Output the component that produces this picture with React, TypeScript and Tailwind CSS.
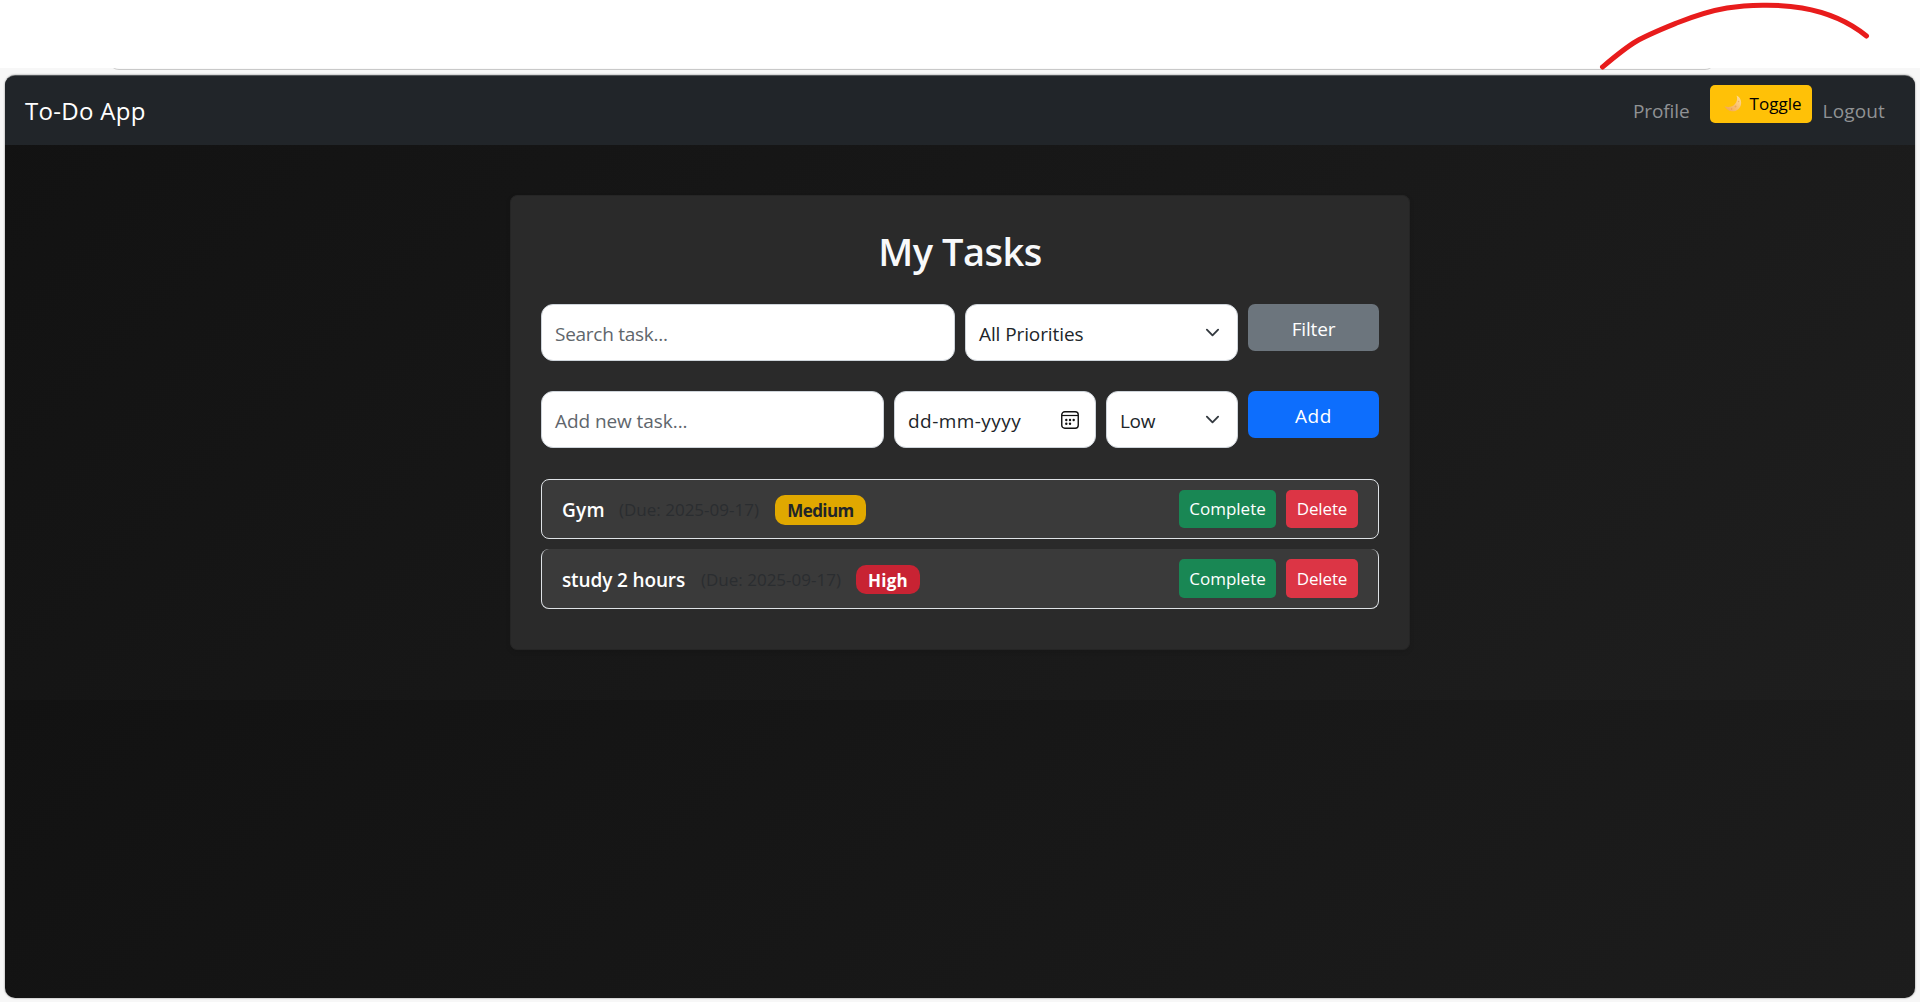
import type { ReactNode } from "react";

const tasks = [
  {
    title: "Gym",
    titleClass: "w-[41px] tracking-[0.3px]",
    due: "2025-09-17",
    priority: "Medium",
    badge: "ml-[15px] h-[30px] w-[91px] bg-[#e0a800] text-[#212529] tracking-[-0.6px]",
    row: "border h-[60px] pb-px",
    button: "h-[38px]",
  },
  {
    title: "study 2 hours",
    titleClass: "w-[123px] tracking-[-0.13px]",
    due: "2025-09-17",
    priority: "High",
    badge: "ml-[14px] h-[29px] w-[64px] bg-[#c82333] text-white tracking-[0.2px]",
    row: "border border-t-0 h-[60px]",
    button: "h-[39px]",
  },
];

function Chevron() {
  return (
    <svg viewBox="0 0 16 16" className="h-[15px] w-[15px] shrink-0" fill="none" stroke="#343a40" strokeWidth="2" strokeLinecap="round" strokeLinejoin="round">
      <path d="m2 5 6 6 6-6" />
    </svg>
  );
}

function CalendarIcon() {
  return (
    <svg viewBox="0 0 18 18" className="h-[18px] w-[18px] shrink-0">
      <rect x="0.75" y="0.75" width="16.5" height="16.5" rx="3" fill="none" stroke="#111" strokeWidth="1.4" />
      <path d="M1 4.5h16" stroke="#111" strokeWidth="1.2" />
      <g fill="#111">
        <circle cx="5.300" cy="9" r="1.2" />
        <circle cx="9" cy="9" r="1.2" />
        <circle cx="12.700" cy="9" r="1.2" />
        <circle cx="5.300" cy="12.700" r="1.2" />
        <circle cx="9" cy="12.700" r="1.2" />
      </g>
    </svg>
  );
}

function Moon() {
  return (
    <svg viewBox="0 0 18 17" className="h-[17px] w-[18px] shrink-0">
      <defs>
        <linearGradient id="moon" x1="0" y1="1" x2="1" y2="0">
          <stop offset="0" stopColor="#f0a04b" />
          <stop offset="0.5" stopColor="#f9c070" />
          <stop offset="1" stopColor="#ffe09a" />
        </linearGradient>
      </defs>
      <path d="M12.6 0.4C16 2 17.8 5.6 17 9.4 16 14 12 16.7 7.8 16.2 4.6 15.8 1.8 13.8 0.5 11.2 4.4 12.6 8.3 12 10.8 9.2 13.2 6.5 13.6 3.3 12.6 0.4Z" fill="url(#moon)" />
      <circle cx="11.5" cy="11.6" r="1" fill="#eda55a" />
      <circle cx="14.6" cy="6.5" r="0.7" fill="#f0ad60" />
      <circle cx="7.6" cy="14" r="0.7" fill="#e59a50" />
    </svg>
  );
}

function Field({ className, children }: { className: string; children: ReactNode }) {
  return (
    <div className={`flex h-[57px] items-center justify-between rounded-[12px] border border-[#ced4da] bg-white pl-[13px] ${className}`}>
      {children}
    </div>
  );
}

export default function App() {
  return (
    <div className="flex h-[1002px] w-[1920px] flex-col overflow-hidden bg-[#f7f7f7] font-['Open_Sans',sans-serif] text-[19px] leading-7 whitespace-nowrap">
      <div className="relative h-[68px] shrink-0 bg-white">
        <svg viewBox="0 0 290 72" className="absolute top-0 left-[1590px] z-10 h-[72px] w-[290px]" fill="none" stroke="#e81c1c" strokeWidth="5" strokeLinecap="round" strokeLinejoin="round">
          <path d="M12.5 67C22 59 35 48 46 41.5C58 34.500 77 27 88 22.500C102 17 119 11 137 8C156 5 188 3.500 212 8C241 13 263 25 276.500 36" />
        </svg>
      </div>
      <div className="ml-[109px] h-[7px] w-[1606px] shrink-0 overflow-hidden">
        <div className="-mt-[18px] h-5 w-full rounded-b-[10px] border-b border-[#c9c9c9] bg-[#fafafa]" />
      </div>

      <main className="mx-[5px] flex h-[923px] shrink-0 flex-col overflow-hidden rounded-[10px] border-t border-[#55595c] bg-[linear-gradient(135deg,#121212,#1e1e1e)] bg-[length:100%_624px] shadow-[0_0_2px_rgba(0,0,0,0.5)]">
        <nav className="flex h-[69px] shrink-0 items-center justify-between bg-[#212529] pr-[30px] pl-5">
          <span className="text-2xl tracking-[0.3px] text-white">To-Do App</span>
          <div className="flex h-full items-center text-[#909294]">
            <span className="mr-[20px] tracking-[-0.1px]">Profile</span>
            <button className="mr-[11px] mb-[14px] flex h-[38px] w-[102px] items-center rounded-[5px] bg-[#ffc107] pl-[14px] text-[17px] text-black">
              <Moon />
              <span className="ml-[8px] pt-px">Toggle</span>
            </button>
            <span className="tracking-[0.15px]">Logout</span>
          </div>
        </nav>

        <section className="mx-auto mt-[50px] h-[455px] w-[900px] shrink-0 rounded-[7px] border border-[#252525] bg-[#2a2a2a] px-[30px] shadow-[0_2px_5px_rgba(0,0,0,0.1)]">
          <h1 className="mt-[30px] text-center text-[38px] leading-[50px] font-semibold tracking-[-0.5px] text-[#f8f9fa]">My Tasks</h1>

          <div className="mt-[28px] flex gap-[10px]">
            <Field className="w-[414px] pt-[2px] tracking-[-0.27px] text-[#5f666c]">Search task...</Field>
            <Field className="w-[273px] pr-[17px] text-[#212529]">
              <span className="pt-[2px] tracking-[-0.1px]">All Priorities</span>
              <Chevron />
            </Field>
            <button className="flex h-[47px] w-[131px] items-center justify-center rounded-[7px] bg-[#6c757d] pt-[3px] tracking-[-0.17px] text-white">Filter</button>
          </div>

          <div className="mt-[30px] flex gap-[10px]">
            <Field className="w-[343px] pt-[2px] tracking-[-0.07px] text-[#5f666c]">Add new task...</Field>
            <Field className="w-[202px] pr-[16px] text-[#212529]">
              <span className="pt-[2px] tracking-[0.45px]">dd-mm-yyyy</span>
              <CalendarIcon />
            </Field>
            <Field className="w-[132px] pr-[17px] text-[#212529]">
              <span className="pt-[2px] tracking-[-0.3px]">Low</span>
              <Chevron />
            </Field>
            <button className="flex h-[47px] w-[131px] items-center justify-center rounded-[7px] bg-[#0d6efd] pt-[3px] tracking-[0.5px] text-white">Add</button>
          </div>

          <ul className="mt-[31px] flex flex-col gap-[10px]">
            {tasks.map((task) => (
              <li key={task.title} className={`flex items-center rounded-[8px] border-[#dee2e6] bg-[#3a3a3a] px-5 text-[17px] ${task.row}`}>
                <span className={`pt-[2px] text-[19px] font-semibold text-white ${task.titleClass}`}>{task.title}</span>
                <span className="ml-[16px] w-[141px] pt-[3px] text-[#2a2d30]">(Due: {task.due})</span>
                <span className={`mt-[2px] flex items-center justify-center rounded-[10px] pt-[2px] font-bold ${task.badge}`}>{task.priority}</span>
                <div className="ml-auto flex gap-[10px] text-white">
                  <button className={`w-[97px] rounded-[5px] bg-[#198754] pt-px ${task.button}`}>Complete</button>
                  <button className={`w-[72px] rounded-[5px] bg-[#dc3545] pt-px tracking-[-0.16px] ${task.button}`}>Delete</button>
                </div>
              </li>
            ))}
          </ul>
        </section>
      </main>
    </div>
  );
}
